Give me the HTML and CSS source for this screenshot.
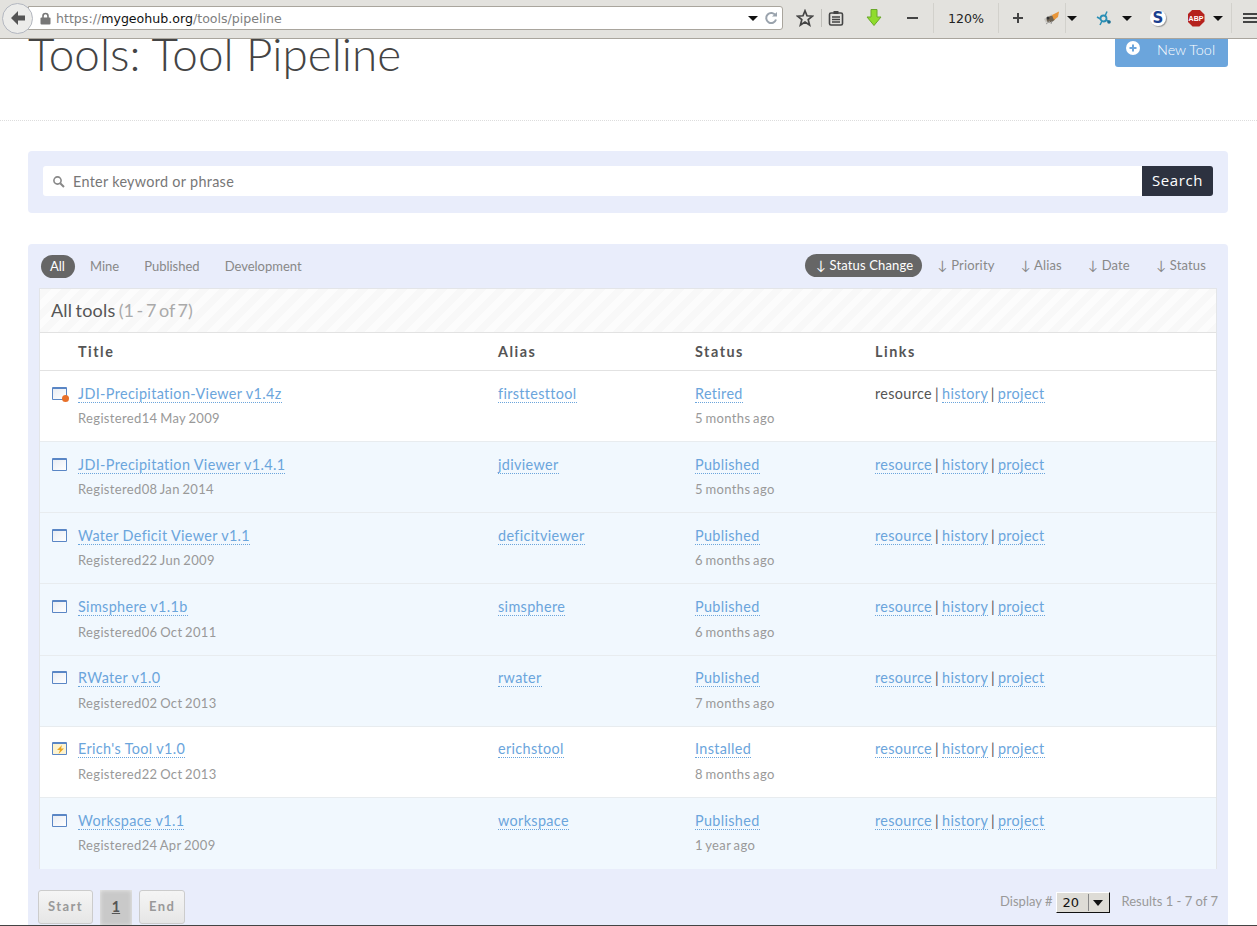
FILE: index.html
```html
<!DOCTYPE html>
<html lang="en">
<head>
  <meta charset="UTF-8">
  <title>Tools: Tool Pipeline</title>
  <link rel="stylesheet" href="styles.css">
</head>
<body>
  <div class="toolbar">
    <div class="back">
      <svg width="18" height="18" viewBox="0 0 18 18"><path d="M9 2 L2 9 L9 16 L9 11.5 L16 11.5 L16 6.5 L9 6.5 Z" fill="#555"/></svg>
    </div>
    <div class="urlbar">
      <svg class="lock" width="11" height="13" viewBox="0 0 11 13"><path d="M3 6 V4 a2.5 2.5 0 0 1 5 0 V6" fill="none" stroke="#777" stroke-width="1.6"/><rect x="0.5" y="5.5" width="10" height="7" rx="1" fill="#777"/></svg>
      <span class="url">https://<b>mygeohub.org</b>/tools/pipeline</span>
      <span class="url-caret"></span>
      <svg width="14" height="14" viewBox="0 0 14 14"><path d="M11.5 4.5 A5 5 0 1 0 12 8.5" fill="none" stroke="#9aa3ad" stroke-width="2"/><path d="M8 5.5 H13 V1 Z" fill="#9aa3ad"/></svg>
    </div>
    <div class="tb star"><svg width="18" height="18" viewBox="0 0 18 18"><path d="M9 1.8 L11 6.8 L16.4 7.2 L12.2 10.6 L13.6 16 L9 13 L4.4 16 L5.8 10.6 L1.6 7.2 L7 6.8 Z" fill="none" stroke="#444" stroke-width="1.7"/></svg></div>
    <i class="sep sep-a"></i>
    <div class="tb clip"><svg width="16" height="16" viewBox="0 0 16 16"><rect x="1.5" y="3" width="13" height="12" rx="1.5" fill="none" stroke="#444" stroke-width="1.6"/><rect x="5.5" y="1" width="5" height="3" fill="#444"/><path d="M4 7 H12 M4 9.5 H12 M4 12 H12" stroke="#444" stroke-width="1.3"/></svg></div>
    <div class="tb down"><svg width="16" height="20" viewBox="0 0 16 20"><path d="M5 1.5 H11 V9 H15 L8 17.5 L1 9 H5 Z" fill="#8fdc2c" stroke="#6aa82a"/></svg></div>
    <div class="tb minus"><i class="dash"></i></div>
    <i class="sep sep-b"></i>
    <div class="zoom">120%</div>
    <i class="sep sep-c"></i>
    <div class="tb plus"><svg width="12" height="12" viewBox="0 0 12 12"><path d="M6 1 V11 M1 6 H11" stroke="#444" stroke-width="2"/></svg></div>
    <div class="tb bug"><svg width="18" height="16" viewBox="0 0 18 16"><path d="M1 9 L9 4 L8 9 L3 13 Z" fill="#c9c7c2"/><ellipse cx="8" cy="9" rx="4.5" ry="3" fill="#6d6252" transform="rotate(-25 8 9)"/><path d="M9 5 L16 1.5 L15 7 L11 10 Z" fill="#e8963a"/><path d="M3 14 L7 11 M8 14 L9 11" stroke="#999" stroke-width="1"/><circle cx="5" cy="8" r="1.5" fill="#333"/></svg></div>
    <i class="sep sep-d"></i>
    <span class="caret caret-a"></span>
    <div class="tb net"><svg width="16" height="16" viewBox="0 0 16 16"><circle cx="7.5" cy="8.5" r="3" fill="none" stroke="#2a8fb5" stroke-width="1.8"/><path d="M9 6 L11 1.5 M4.5 9 L1 7 M6 11 L4 15 M10 10 L14 12" stroke="#2a8fb5" stroke-width="1.5"/><circle cx="13" cy="12" r="1.8" fill="#1c6f93"/></svg></div>
    <span class="caret caret-b"></span>
    <div class="tb s-logo">S</div>
    <div class="tb abp"><span>ABP</span></div>
    <span class="caret caret-c"></span>
    <i class="sep sep-e"></i>
    <div class="tb menu"><i></i><i></i><i></i></div>
  </div>

  <div class="page">
    <header class="page-head">
      <h1>Tools: Tool Pipeline</h1>
      <a class="new-tool">
        <svg width="14" height="14" viewBox="0 0 14 14"><circle cx="7" cy="7" r="7" fill="#fff"/><path d="M7 3.5 V10.5 M3.5 7 H10.5" stroke="#6ba5dc" stroke-width="2"/></svg>
        <span>New Tool</span>
      </a>
    </header>

    <form class="search-panel">
      <div class="search-field">
        <svg width="13" height="13" viewBox="0 0 13 13"><circle cx="5.5" cy="5.5" r="3.6" fill="none" stroke="#888" stroke-width="1.6"/><path d="M8.2 8.2 L12 12" stroke="#888" stroke-width="2"/></svg>
        <span>Enter keyword or phrase</span>
      </div>
      <button type="button" class="search-btn">Search</button>
    </form>

    <section class="tools-panel">
      <div class="filters">
        <nav class="pills">
          <a class="active">All</a>
          <a>Mine</a>
          <a>Published</a>
          <a>Development</a>
        </nav>
        <nav class="pills sorts">
          <a class="active">↓ Status Change</a>
          <a>↓ Priority</a>
          <a>↓ Alias</a>
          <a>↓ Date</a>
          <a>↓ Status</a>
        </nav>
      </div>

      <div class="list">
        <div class="caption">All tools <span>(1 - 7 of 7)</span></div>
        <div class="row head">
          <div></div>
          <div>Title</div>
          <div>Alias</div>
          <div>Status</div>
          <div>Links</div>
        </div>
        <div class="row">
          <div><span class="win"><i class="badge-retired"></i></span></div>
          <div><a>JDI-Precipitation-Viewer v1.4z</a><small>Registered14 May 2009</small></div>
          <div><a>firsttesttool</a></div>
          <div><a>Retired</a><small>5 months ago</small></div>
          <div class="links">resource | <a>history</a> | <a>project</a></div>
        </div>
        <div class="row alt">
          <div><span class="win"></span></div>
          <div><a>JDI-Precipitation Viewer v1.4.1</a><small>Registered08 Jan 2014</small></div>
          <div><a>jdiviewer</a></div>
          <div><a>Published</a><small>5 months ago</small></div>
          <div class="links"><a>resource</a> | <a>history</a> | <a>project</a></div>
        </div>
        <div class="row alt">
          <div><span class="win"></span></div>
          <div><a>Water Deficit Viewer v1.1</a><small>Registered22 Jun 2009</small></div>
          <div><a>deficitviewer</a></div>
          <div><a>Published</a><small>6 months ago</small></div>
          <div class="links"><a>resource</a> | <a>history</a> | <a>project</a></div>
        </div>
        <div class="row alt">
          <div><span class="win"></span></div>
          <div><a>Simsphere v1.1b</a><small>Registered06 Oct 2011</small></div>
          <div><a>simsphere</a></div>
          <div><a>Published</a><small>6 months ago</small></div>
          <div class="links"><a>resource</a> | <a>history</a> | <a>project</a></div>
        </div>
        <div class="row alt">
          <div><span class="win"></span></div>
          <div><a>RWater v1.0</a><small>Registered02 Oct 2013</small></div>
          <div><a>rwater</a></div>
          <div><a>Published</a><small>7 months ago</small></div>
          <div class="links"><a>resource</a> | <a>history</a> | <a>project</a></div>
        </div>
        <div class="row">
          <div><span class="win win-installed"><svg width="9" height="9" viewBox="0 0 9 9"><path d="M6 0 L1 5 H4 L2.5 9 L8 3.5 H5 Z" fill="#e9a520"/></svg></span></div>
          <div><a>Erich's Tool v1.0</a><small>Registered22 Oct 2013</small></div>
          <div><a>erichstool</a></div>
          <div><a>Installed</a><small>8 months ago</small></div>
          <div class="links"><a>resource</a> | <a>history</a> | <a>project</a></div>
        </div>
        <div class="row alt last">
          <div><span class="win"></span></div>
          <div><a>Workspace v1.1</a><small>Registered24 Apr 2009</small></div>
          <div><a>workspace</a></div>
          <div><a>Published</a><small>1 year ago</small></div>
          <div class="links"><a>resource</a> | <a>history</a> | <a>project</a></div>
        </div>
      </div>

      <div class="list-foot">
        <div class="pager">
          <a class="pg">Start</a>
          <a class="pg current">1</a>
          <a class="pg">End</a>
        </div>
        <div class="counts">
          <span>Display #</span>
          <span class="select"><span>20</span><i></i></span>
          <span class="results">Results 1 - 7 of 7</span>
        </div>
      </div>
    </section>
  </div>
  <div class="bottom-line"></div>
</body>
</html>
```

FILE: styles.css
```css
* {
  box-sizing: border-box;
}

html, body {
  height: 100%;
}

body {
  display: flex;
  flex-direction: column;
  height: 926px;
  margin: 0;
  overflow: hidden;
  font-family: Lato, 'Open Sans', sans-serif;
  font-size: 14.4px;
  color: #555;
  background-color: #fff;
}

/* browser chrome */
.toolbar {
  display: flex;
  align-items: center;
  flex: 0 0 39px;
  height: 39px;
  padding: 0 0 2px 2px;
  background-color: #e3e2de;
  border-bottom: 1px solid #a9a59d;
  position: relative;
  z-index: 2;
}

.back {
  display: flex;
  align-items: center;
  justify-content: center;
  width: 31px;
  height: 31px;
  border-radius: 50%;
  background-color: #ececea;
  border: 1px solid #b3b7c0;
  position: relative;
  z-index: 1;
}

.urlbar {
  display: flex;
  align-items: center;
  width: 755px;
  height: 24px;
  margin-left: -5px;
  padding: 0 4px 0 11px;
  background-color: #fff;
  border: 1px solid #a9a59d;
  border-radius: 0 3px 3px 0;
  font-family: 'DejaVu Sans', sans-serif;
  font-size: 12.6px;
  color: #808080;
}

.lock {
  margin-right: 5px;
}

.url {
  flex: 1;
}

.url b {
  font-weight: normal;
  color: #111;
}

.url-caret, .caret {
  width: 0;
  height: 0;
  border-left: 5px solid transparent;
  border-right: 5px solid transparent;
  border-top: 5px solid #111;
}

.url-caret {
  margin-right: 6px;
}

.tb {
  display: flex;
  align-items: center;
  justify-content: center;
  width: 24px;
  height: 24px;
}

.sep {
  width: 1px;
  height: 30px;
  background-color: #d2d1cc;
}

.star { margin-left: 10px; }
.sep-a { margin-left: 4px; height: 18px; background-color: #c0bfba; }
.clip { margin-left: 2px; }
.down { margin-left: 14px; }
.minus { margin-left: 14px; }
.sep-b { margin-left: 9px; }
.zoom {
  width: 64px;
  text-align: center;
  font-family: 'DejaVu Sans', sans-serif;
  font-size: 12.6px;
  color: #222;
}
.plus { margin-left: 7px; }
.bug { margin-left: 10px; }
.sep-d { margin-left: 1px; }
.caret-a { margin-left: 1px; }
.net { margin-left: 15px; }
.caret-b { margin-left: 6px; }
.abp { margin-left: 14px; }
.caret-c { margin-left: 5px; }
.sep-e { margin-left: 8px; }
.menu { margin-left: 11px; }

.dash {
  width: 11px;
  height: 2px;
  background-color: #444;
}

.s-logo {
  width: 16px;
  height: 16px;
  margin-left: 18px;
  margin-right: 4px;
  font-family: 'DejaVu Sans', sans-serif;
  font-weight: bold;
  font-size: 15px;
  color: #1b3f8f;
  background-color: #fff;
  border-radius: 50%;
  box-shadow: 1px 1px 1px #999;
}

.abp span {
  display: flex;
  align-items: center;
  justify-content: center;
  width: 17px;
  height: 17px;
  clip-path: polygon(30% 0, 70% 0, 100% 30%, 100% 70%, 70% 100%, 30% 100%, 0 70%, 0 30%);
  background-color: #b5221d;
  color: #fff;
  font-family: 'Liberation Sans', sans-serif;
  font-size: 7px;
  font-weight: bold;
}

.menu {
  flex-direction: column;
  align-items: flex-start;
  gap: 2px;
  width: 14px;
  flex: none;
}

.menu i {
  width: 14px;
  height: 2px;
  background-color: #444;
}

/* page */
.page {
  flex: 1;
  min-height: 0;
  overflow: hidden;
}

.page-head {
  display: flex;
  justify-content: space-between;
  align-items: flex-start;
  height: 82px;
  padding: 0 29px 0 28px;
  border-bottom: 1px dotted #ddd;
}

h1 {
  margin: -14px 0 0;
  font-size: 45.8px;
  font-weight: 300;
  line-height: 58px;
  color: #444;
}

.new-tool {
  display: flex;
  align-items: center;
  width: 113px;
  height: 28px;
  padding: 0 0 7px 11px;
  color: #fff;
  font-weight: 300;
  font-size: 14.4px;
  background-color: #6ba5dc;
  border-radius: 0 0 3px 3px;
}

.new-tool svg {
  margin-top: -3px;
}

.new-tool span {
  margin-left: 17px;
}

.search-panel {
  display: flex;
  height: 62px;
  margin: 30px 29px 31px 28px;
  padding: 15px 15px 17px;
  background-color: #e9edfb;
  border-radius: 4px;
}

.search-field {
  display: flex;
  align-items: center;
  flex: 1;
  padding-left: 9px;
  background-color: #fff;
  border-radius: 3px 0 0 3px;
  color: #777;
  letter-spacing: 0.3px;
}

.search-field svg {
  margin-right: 8px;
}

.search-btn {
  width: 71px;
  padding: 0 0 2px;
  border: none;
  border-radius: 0 3px 3px 0;
  background-color: #2d3240;
  color: #fff;
  font-family: 'Open Sans', sans-serif;
  font-size: 15px;
  letter-spacing: 0.6px;
}

.tools-panel {
  height: 700px;
  margin: 0 29px 0 28px;
  padding: 0 11px;
  background-color: #e9edfb;
  border-radius: 4px 4px 0 0;
}

.filters {
  display: flex;
  justify-content: space-between;
  height: 44px;
  padding-top: 10px;
}

.pills {
  display: flex;
  align-items: flex-start;
  margin: 1px 0 0 2px;
  font-size: 13px;
  color: #888;
}

.pills a {
  padding: 0 9px;
  line-height: 23px;
  margin-right: 7px;
  border-radius: 12px;
}

.pills .active {
  padding-right: 10px;
  margin-right: 6px;
  background-color: #666;
  color: #fff;
}

.sorts {
  margin: 0;
  letter-spacing: 0.15px;
}

.sorts a {
  margin-right: 0;
  margin-left: 4.5px;
  padding: 0 11px;
}

.sorts .active {
  margin-right: 0;
  padding-right: 9px;
}

.list {
  height: 581px;
  border: 1px solid #e3e5e8;
  background-color: #fff;
}

.caption {
  height: 44px;
  padding-left: 11px;
  border-bottom: 1px solid #e2e2e2;
  font-size: 18px;
  line-height: 43px;
  letter-spacing: 0.2px;
  word-spacing: -1.5px;
  color: #555;
  background: repeating-linear-gradient(-45deg, #f8f8f8, #f8f8f8 7px, #fcfcfc 7px, #fcfcfc 14px);
}

.caption span {
  letter-spacing: 0;
  word-spacing: -2px;
  color: #aaa;
}

.row {
  display: grid;
  grid-template-columns: 38px 420px 197px 180px 1fr;
  height: 71.14px;
  padding-top: 13.78px;
  line-height: 18px;
  letter-spacing: 0.35px;
  border-bottom: 1px solid #e8ecef;
}

.row.head {
  align-items: center;
  height: 38px;
  padding-top: 0;
  font-weight: bold;
  letter-spacing: 1.5px;
  border-bottom-color: #e2e2e2;
}

.row.alt {
  background-color: #f1f8fe;
}

.row.last {
  border-bottom: none;
}

.row a {
  color: #6ba5dc;
  border-bottom: 1px dotted #6ba5dc;
}

.row small {
  display: block;
  margin-top: 6.4px;
  font-size: 13px;
  letter-spacing: 0.35px;
  word-spacing: -1px;
  color: #999;
}

.links {
  word-spacing: -1px;
}

.win {
  display: block;
  position: relative;
  width: 15px;
  height: 13px;
  margin: 2px 0 0 12px;
  border: 2px solid #5a86c5;
  border-width: 2px 1px 1px;
  border-radius: 1px;
  background-image: linear-gradient(to bottom right, #e9edf4, #fff);
}

.badge-retired {
  position: absolute;
  right: -3px;
  bottom: -3px;
  width: 7px;
  height: 7px;
  border-radius: 50%;
  background-color: #e8702a;
}

.win-installed {
  background-color: #fdf3cf;
  background-image: none;
}

.win-installed svg {
  position: absolute;
  left: 3px;
  top: 1px;
}

.list-foot {
  display: flex;
  justify-content: space-between;
  padding-top: 21px;
}

.pager {
  display: flex;
  gap: 7px;
  margin-left: -1px;
}

.pg {
  height: 34px;
  padding: 0 9px;
  line-height: 31px;
  font-size: 13px;
  font-weight: bold;
  letter-spacing: 1.4px;
  color: #999;
  border: 1px solid #ccc;
  border-radius: 3px;
  background-image: linear-gradient(to bottom, #f5f5f5, #e6e6e6);
}

.pg.current {
  width: 32px;
  height: 36px;
  padding: 0;
  text-align: center;
  line-height: 34px;
  font-size: 14.4px;
  letter-spacing: 0;
  color: #555;
  border: none;
  border-radius: 0;
  background-color: #c9c9c9;
  background-image: none;
  box-shadow: inset 0 0 4px #eee;
  text-decoration: underline;
}

.counts {
  display: flex;
  gap: 3px;
  align-items: flex-start;
  margin-right: -1px;
  font-size: 13px;
  color: #999;
}

.counts > span {
  line-height: 22px;
}

.select {
  display: flex;
  align-items: center;
  width: 54px;
  height: 21px;
  margin-top: 2px;
  padding-left: 6px;
  font-family: 'DejaVu Sans', sans-serif;
  color: #111;
  background-color: #dedcd6;
  border: 1px solid;
  border-color: #fff #111 #111 #fff;
  position: relative;
}

.select i {
  position: absolute;
  right: 2px;
  top: 1px;
  width: 19px;
  height: 17px;
  border-left: 1px solid #888;
}

.select i::after {
  content: "";
  position: absolute;
  left: 4px;
  top: 6px;
  border-left: 5px solid transparent;
  border-right: 5px solid transparent;
  border-top: 6px solid #111;
}

.results {
  margin-left: 9px;
}

.bottom-line {
  flex: 0 0 1px;
  background-color: #444;
}
```
